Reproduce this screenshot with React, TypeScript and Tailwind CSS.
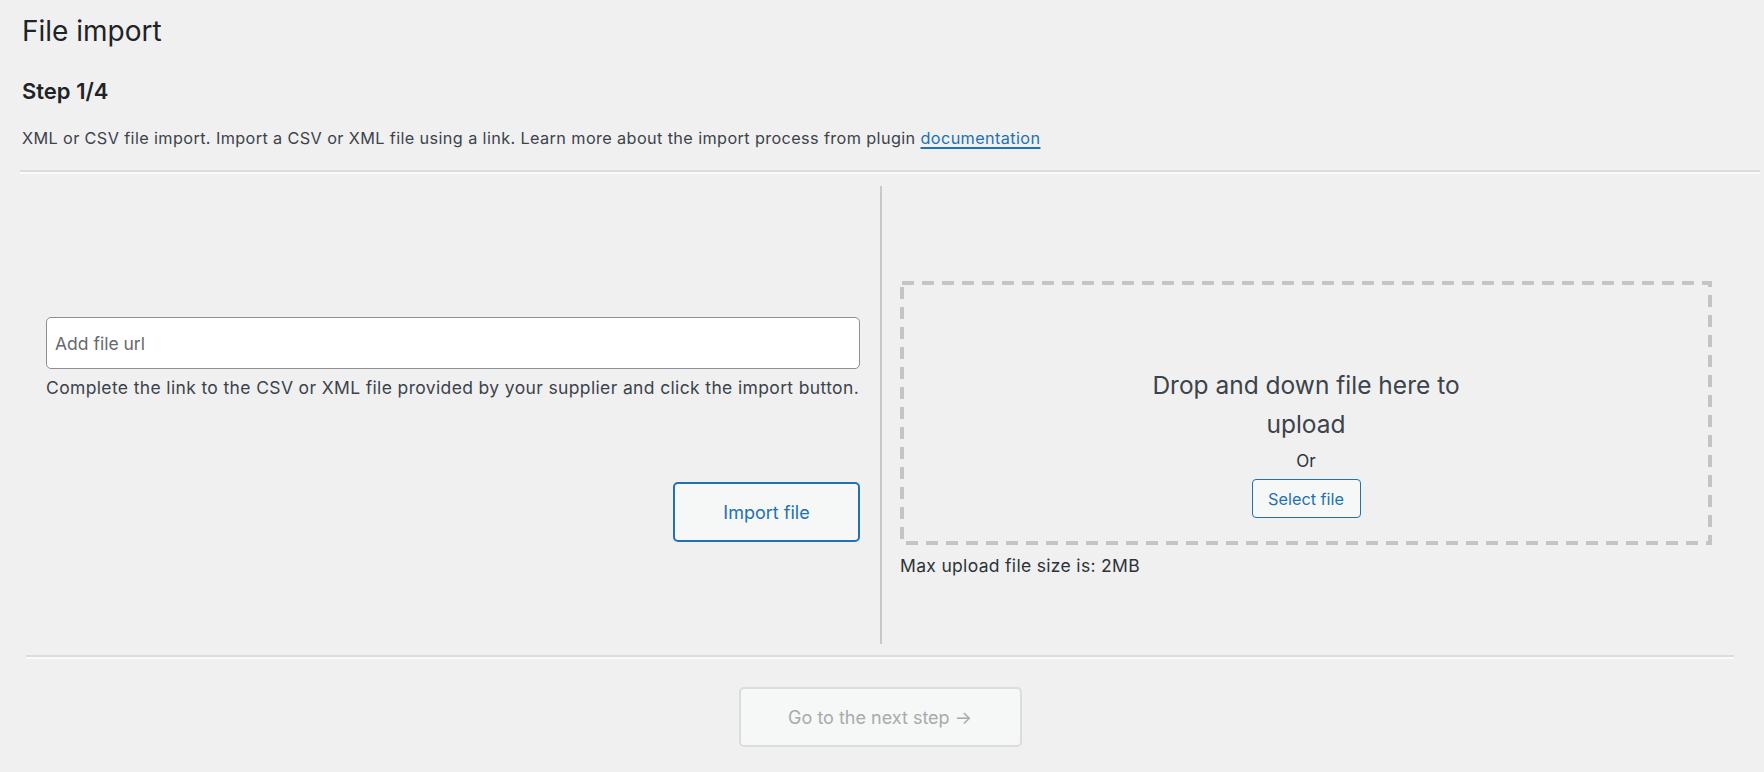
import React from "react";

export default function App() {
  return (
    <div
      className="min-h-screen w-full bg-[#f0f0f1] pl-[20px] pr-[4px] text-[#3c434a]"
      style={{ fontFamily: "Inter, 'Noto Sans', 'Liberation Sans', sans-serif" }}
    >
      <h1 className="ml-[2px] pt-[13px] text-[28px] font-normal leading-[1.3] text-[#1d2327]">File import</h1>
      <h2 className="ml-[2px] mt-[27px] text-[22px] font-semibold leading-[1.4] text-[#1d2327]">Step 1/4</h2>
      <p className="ml-[2px] mt-[19px] text-[16.25px] leading-[24px] tracking-[0.38px]">
        XML or CSV file import. Import a CSV or XML file using a link. Learn more about the import process from plugin{" "}
        <a href="#" className="text-[#2271b1] underline decoration-[1.5px] underline-offset-[3px]">
          documentation
        </a>
      </p>
      <div className="mt-[20px] border-t-2 border-b-2 border-t-[#dcdcde] border-b-[#fafafa]" />

      <div className="ml-[6px] mr-[26px]">
        <div className="mt-[12px] flex h-[458px]">
          <div className="flex w-1/2 flex-col justify-center px-[20px] pt-[29px]">
            <input
              type="text"
              placeholder="Add file url"
              className="h-[52px] w-full rounded-[5px] border-[1.5px] border-[#8c8f94] bg-white px-[8px] text-[17.5px] text-[#2c3338] outline-none placeholder:text-[#646970]"
            />
            <p className="mt-[7px] text-[17.5px] leading-[24px] tracking-[0.36px]">
              Complete the link to the CSV or XML file provided by your supplier and click the import button.
            </p>
            <div className="mt-[82px] flex justify-end">
              <button className="h-[60px] w-[187px] rounded-[5px] border-2 border-[#2271b1] bg-[#f6f7f7] text-[18px] text-[#2271b1]">
                Import file
              </button>
            </div>
          </div>
          <div className="flex w-1/2 flex-col justify-center border-l-2 border-[#c8c8c8] pl-[18px] pr-[22px] pt-[29px]">
            <div className="relative flex flex-col items-center pt-[85px] pb-[27px]">
              <svg className="pointer-events-none absolute inset-[2px] h-[calc(100%-4px)] w-[calc(100%-4px)] overflow-visible">
                <rect
                  x="0"
                  y="0"
                  width="100%"
                  height="100%"
                  fill="none"
                  stroke="#c3c4c7"
                  strokeWidth="4"
                  strokeDasharray="12 8"
                />
              </svg>
              <p className="max-w-[340px] text-center text-[24.5px] leading-[39px] text-[#3c434a]">
                Drop and down file here to upload
              </p>
              <p className="mt-[5px] text-[17px] leading-[24px] text-[#2c3338]">Or</p>
              <button className="mt-[6px] h-[39px] w-[109px] rounded-[4px] border-[1.5px] border-[#2271b1] bg-[#f6f7f7] text-[16.25px] text-[#2271b1]">
                Select file
              </button>
            </div>
            <p className="mt-[9px] text-[17.5px] leading-[24px] tracking-[0.32px] text-[#2c3338]">
              Max upload file size is: 2MB
            </p>
          </div>
        </div>
        <div className="mt-[11px] border-t-2 border-b-2 border-t-[#dcdcde] border-b-[#fafafa]" />
        <div className="mt-[28px] flex justify-center">
          <button className="h-[60px] w-[283px] rounded-[5px] border-2 border-[#dcdcde] bg-[#f6f7f7] text-[18px] text-[#a7aaad]">
            Go to the next step →
          </button>
        </div>
      </div>
    </div>
  );
}
